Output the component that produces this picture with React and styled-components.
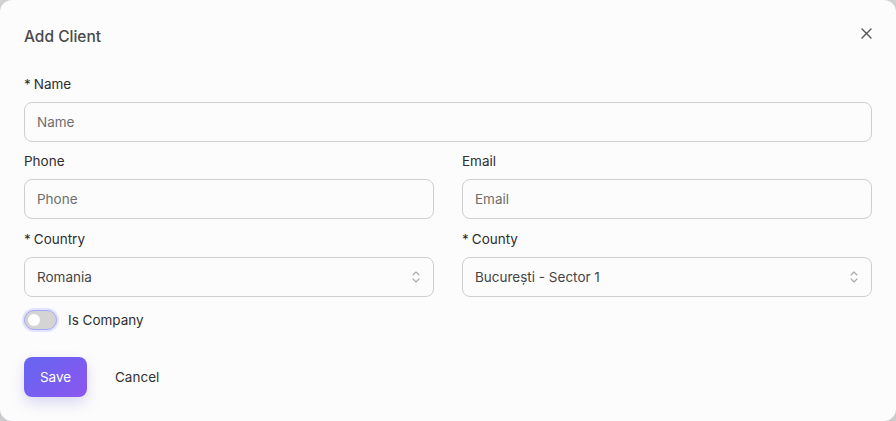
import React, { useState } from 'react'
import styled, { createGlobalStyle } from 'styled-components'

const Global = createGlobalStyle`
  html, body { margin: 0; padding: 0; }
  body {
    background: #d6d6d8;
    font-family: Inter, "Noto Sans", sans-serif;
    -webkit-font-smoothing: antialiased;
  }
`

const Modal = styled.div`
  box-sizing: border-box;
  width: 896px;
  height: 421px;
  background: #fcfcfc;
  border-radius: 12px;
  padding: 24px 24px 24px;
  box-shadow: 0 4px 16px rgba(0, 0, 0, 0.12);
  display: flex;
  flex-direction: column;
`

const Header = styled.div`
  display: flex;
  align-items: center;
  justify-content: space-between;
  height: 24px;
  margin-bottom: 26px;
`

const Title = styled.h2`
  margin: 0;
  font-size: 15.5px;
  font-weight: 500;
  color: #4a4a4a;
`

const Close = styled.button`
  background: none;
  border: none;
  padding: 0;
  margin-right: -2px;
  margin-top: -6px;
  width: 16px;
  height: 16px;
  display: flex;
  align-items: center;
  justify-content: center;
  color: #555;
  cursor: pointer;
`

const Row = styled.div`
  display: grid;
  grid-template-columns: ${p => (p.$cols === 2 ? '1fr 1fr' : '1fr')};
  column-gap: 28px;
  margin-bottom: ${p => (p.$mb === undefined ? 10 : p.$mb)}px;
`

const Field = styled.div`
  display: flex;
  flex-direction: column;
`

const Label = styled.label`
  font-size: 13.5px;
  font-weight: 400;
  line-height: 20px;
  color: #2e2e2e;
  margin-bottom: 8px;
  span { margin-right: 3px; }
`

const Input = styled.input`
  box-sizing: border-box;
  height: 40px;
  width: 100%;
  border: 1px solid #cfcfcf;
  border-radius: 8px;
  background: #fcfcfc;
  padding: 0 12px;
  font-family: inherit;
  font-size: 13.5px;
  color: #333;
  outline: none;
  &::placeholder { color: #6e6e6e; }
`

const SelectBox = styled.div`
  box-sizing: border-box;
  height: 40px;
  border: 1px solid #cfcfcf;
  border-radius: 8px;
  padding: 0 12px;
  display: flex;
  align-items: center;
  justify-content: space-between;
  font-size: 13.5px;
  color: #444;
`

const ToggleRow = styled.div`
  display: flex;
  align-items: center;
  gap: 11px;
  height: 20px;
  margin-top: 13px;
  font-size: 13.5px;
  color: #2e2e2e;
`

const Track = styled.button`
  box-sizing: border-box;
  width: 33px;
  height: 20px;
  border-radius: 10px;
  border: 1.5px solid #a5a8f5;
  box-shadow: 0 0 0 2px #e3e4fb;
  background: #d4d4d4;
  padding: 0;
  position: relative;
  cursor: pointer;
`

const Knob = styled.span`
  position: absolute;
  top: 2.5px;
  left: ${p => (p.$on ? '15px' : '3px')};
  width: 12px;
  height: 12px;
  border-radius: 50%;
  background: #fff;
`

const Actions = styled.div`
  display: flex;
  align-items: center;
  gap: 28px;
  margin-top: 27px;
`

const Save = styled.button`
  height: 40px;
  width: 63px;
  border: none;
  border-radius: 8px;
  background: linear-gradient(135deg, #6566f1 0%, #8b56f0 100%);
  color: #fff;
  font-family: inherit;
  font-size: 13.5px;
  box-shadow: 0 6px 14px rgba(99, 90, 200, 0.22);
  cursor: pointer;
`

const Cancel = styled.button`
  background: none;
  border: none;
  padding: 0;
  font-family: inherit;
  font-size: 13.5px;
  color: #333;
  cursor: pointer;
`

const Chevrons = () => (
  <svg width="10" height="16" viewBox="0 0 10 16" fill="none" stroke="#aaa" strokeWidth="1.1" strokeLinecap="round" strokeLinejoin="round">
    <path d="M2 6 L5 3 L8 6" />
    <path d="M2 10 L5 13 L8 10" />
  </svg>
)

const Select = ({ value }) => (
  <SelectBox>
    <span>{value}</span>
    <Chevrons />
  </SelectBox>
)

export default function App() {
  const [company, setCompany] = useState(false)
  return (
    <>
      <Global />
      <Modal>
        <Header>
          <Title>Add Client</Title>
          <Close aria-label="close">
            <svg width="11" height="11" viewBox="0 0 11 11" stroke="#555" strokeWidth="1.4" strokeLinecap="round">
              <path d="M1 1 L10 10 M10 1 L1 10" />
            </svg>
          </Close>
        </Header>

        <Row $mb={9}>
          <Field>
            <Label><span>*</span>Name</Label>
            <Input placeholder="Name" />
          </Field>
        </Row>

        <Row $cols={2}>
          <Field>
            <Label>Phone</Label>
            <Input placeholder="Phone" />
          </Field>
          <Field>
            <Label>Email</Label>
            <Input placeholder="Email" />
          </Field>
        </Row>

        <Row $cols={2} $mb={0}>
          <Field>
            <Label><span>*</span>Country</Label>
            <Select value="Romania" />
          </Field>
          <Field>
            <Label><span>*</span>County</Label>
            <Select value="București - Sector 1" />
          </Field>
        </Row>

        <ToggleRow>
          <Track onClick={() => setCompany(!company)}>
            <Knob $on={company} />
          </Track>
          Is Company
        </ToggleRow>

        <Actions>
          <Save>Save</Save>
          <Cancel>Cancel</Cancel>
        </Actions>
      </Modal>
    </>
  )
}
